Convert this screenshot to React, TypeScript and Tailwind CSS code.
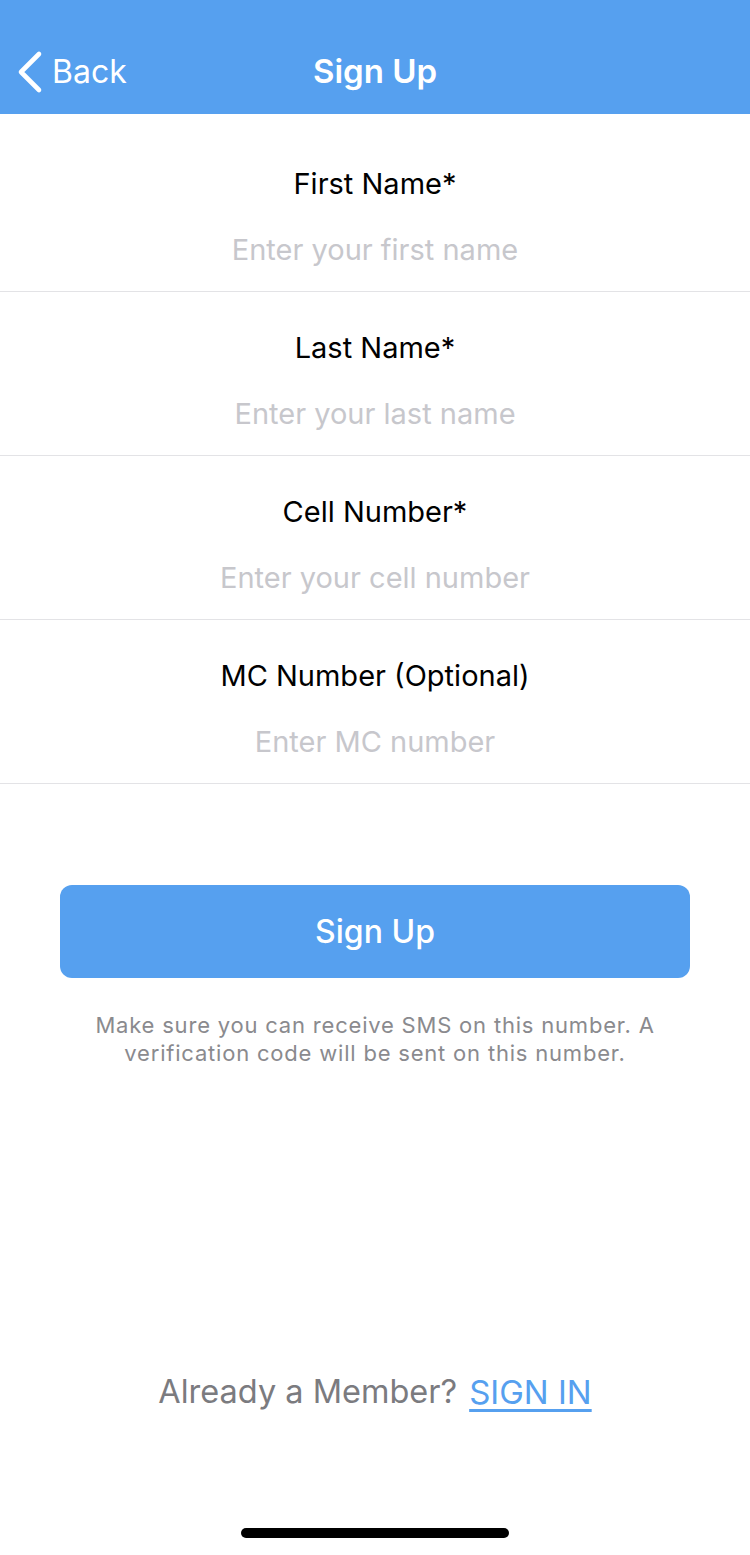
interface Field {
  id: string;
  label: string;
  placeholder: string;
}

const fields: Field[] = [
  { id: 'first', label: 'First Name*', placeholder: 'Enter your first name' },
  { id: 'last', label: 'Last Name*', placeholder: 'Enter your last name' },
  { id: 'cell', label: 'Cell Number*', placeholder: 'Enter your cell number' },
  { id: 'mc', label: 'MC Number (Optional)', placeholder: 'Enter MC number' },
];

export default function App() {
  return (
    <div
      className="w-[750px] h-[1555px] bg-white flex flex-col"
      style={{ fontFamily: 'Inter, "Noto Sans", sans-serif' }}
    >
      <div className="h-[114px] bg-[#56a0ef] relative flex items-center justify-center pt-[28px] shrink-0">
        <div className="absolute left-[16px] top-[50px] flex items-center text-white">
          <svg width="28" height="44" viewBox="0 0 28 44" fill="none" className="mr-[8px]">
            <polyline
              points="23,4 5,22 23,40"
              stroke="white"
              strokeWidth="4.6"
              strokeLinecap="round"
              strokeLinejoin="round"
            />
          </svg>
          <span className="text-[32px] leading-none">Back</span>
        </div>
        <h1 className="text-[33px] font-semibold text-white leading-none">Sign Up</h1>
      </div>

      <div className="flex flex-col pt-[14px]">
        {fields.map((f) => (
          <div
            key={f.id}
            className="h-[164px] border-b border-[#e3e3e6] flex flex-col items-center pt-[39px]"
          >
            <label className="text-[29px] leading-[34px] text-black">{f.label}</label>
            <input
              type="text"
              placeholder={f.placeholder}
              className="mt-[32px] w-full text-center text-[29px] leading-[34px] outline-none placeholder:text-[#c7c7cc] bg-transparent"
            />
          </div>
        ))}
      </div>

      <div className="px-[60px] mt-[101px]">
        <button className="w-full h-[93px] rounded-[12px] bg-[#56a0ef] text-white text-[32px] font-medium">
          Sign Up
        </button>
        <p className="mt-[33px] text-center text-[22px] leading-[28px] tracking-[0.8px] text-[#8a8a8e] px-[10px]">
          Make sure you can receive SMS on this number. A verification code will be sent on this
          number.
        </p>
      </div>

      <div className="flex-1" />

      <div className="flex items-center justify-center gap-[12px] pb-[111px]">
        <span className="text-[32.5px] text-[#7b7b7f]">Already a Member?</span>
        <a className="text-[33px] text-[#56a0ef] underline underline-offset-[5px]">SIGN IN</a>
      </div>

      <div className="flex justify-center pb-[17px]">
        <div className="w-[268px] h-[10px] rounded-full bg-black" />
      </div>
    </div>
  );
}
